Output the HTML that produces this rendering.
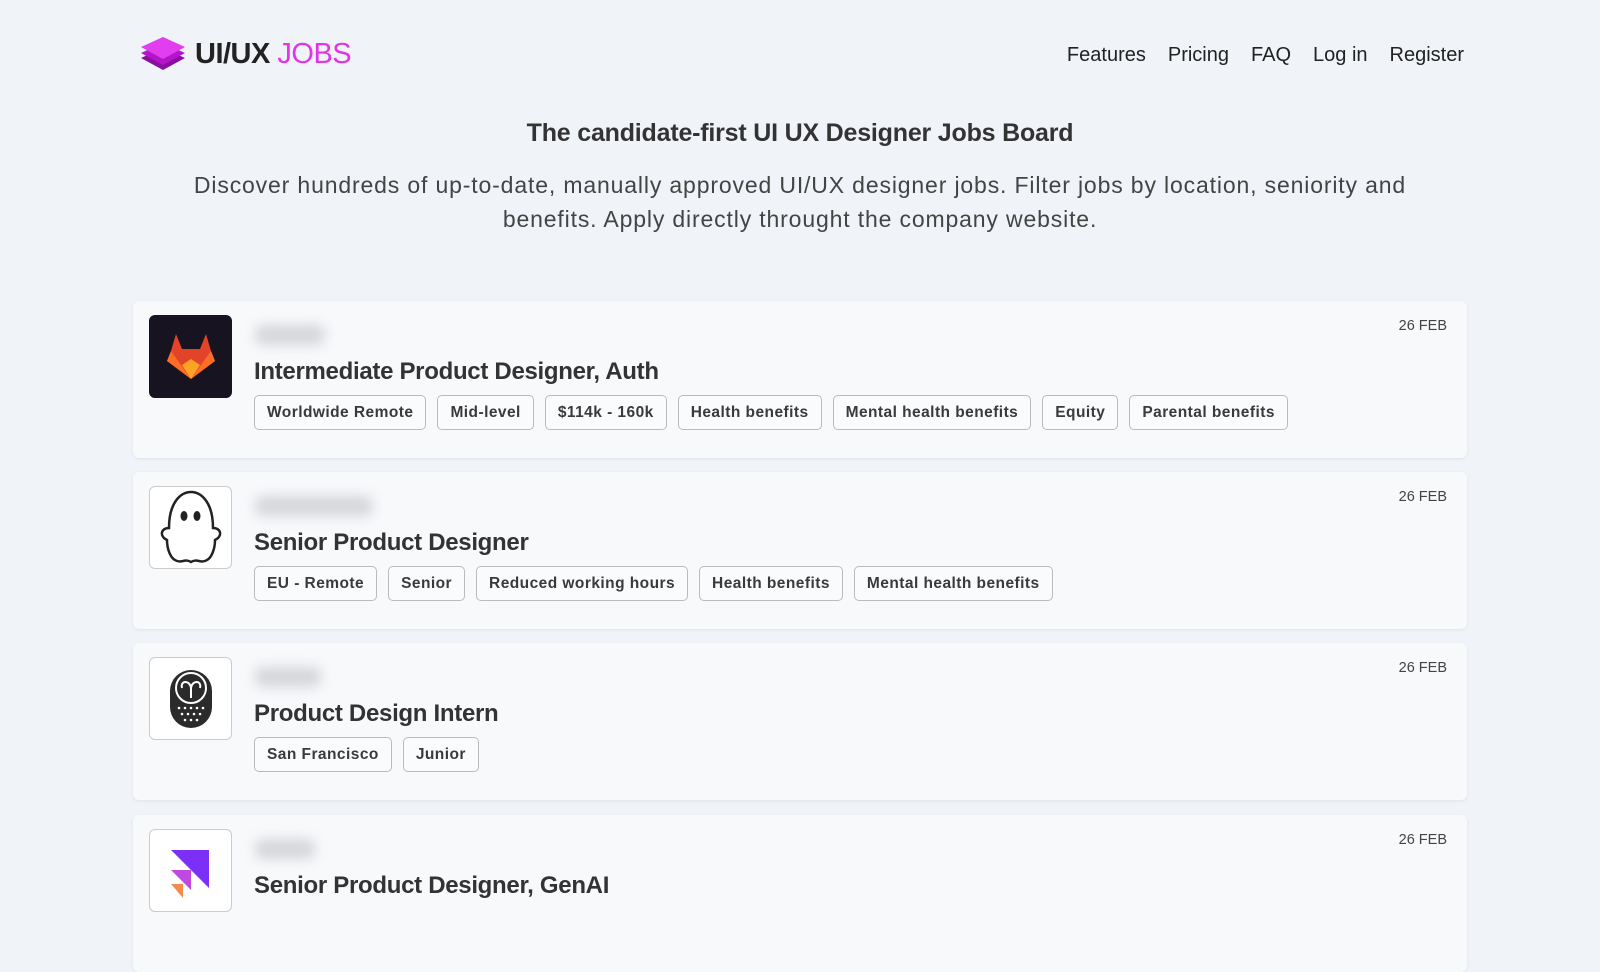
<!DOCTYPE html>
<html><head><meta charset="utf-8"><style>
*{box-sizing:border-box;margin:0;padding:0}
body{width:1600px;height:889px;overflow:hidden;background:#f0f3f8;font-family:"Liberation Sans",sans-serif;color:#222;position:relative}
.logo{position:absolute;left:141px;top:36px;display:flex;align-items:center}
.logo .t{font-size:29px;font-weight:bold;margin-left:10px;letter-spacing:-0.5px}
.logo .t span{color:#e233e6;font-weight:normal}
.nav{position:absolute;right:136px;top:44px;display:flex;gap:22px;font-size:20px;color:#222}
h1{position:absolute;top:119px;left:0;width:1600px;text-align:center;font-size:25px;font-weight:bold;color:#333;letter-spacing:-0.2px}
.sub{position:absolute;top:168px;left:170px;width:1260px;text-align:center;font-size:23px;line-height:34px;color:#444;letter-spacing:0.85px}
.card{position:absolute;left:133px;width:1334px;height:157px;background:#f7f9fb;border-radius:6px;box-shadow:0 1px 3px rgba(0,0,0,.07)}
.lg{position:absolute;left:16px;top:14px;width:83px;height:83px;border-radius:6px;border:1px solid #ccc;background:#fff;overflow:hidden;display:flex;align-items:center;justify-content:center}
.co{position:absolute;left:122px;top:24px;width:70px;height:20px;background:#d4d6da;filter:blur(6px);border-radius:8px}
.ti{position:absolute;left:121px;top:57px;font-size:24px;color:#333;font-weight:bold;letter-spacing:-0.3px}
.tags{position:absolute;left:121px;top:94px;display:flex;gap:11px}
.tag{height:35px;border:1px solid #bbb;border-radius:5px;padding:0 12px;font-size:15.5px;font-weight:bold;line-height:33px;color:#3a3a3a;background:#fafbfc;letter-spacing:0.45px}
.dt{position:absolute;right:20px;top:17px;font-size:14.5px;color:#444}
</style></head><body>
<div class="logo"><svg width="44" height="36" viewBox="0 0 44 36"><path d="M22 12 L44 22 L22 34 L0 22Z" fill="#8a0fa0"/><path d="M22 7 L44 17 L22 29 L0 17Z" fill="#b316c8"/><path d="M22 1 L44 11 L22 23 L0 11Z" fill="#e23ef0"/></svg><div class="t">UI/UX <span>JOBS</span></div></div>
<div class="nav"><span>Features</span><span>Pricing</span><span>FAQ</span><span>Log in</span><span>Register</span></div>
<h1>The candidate-first UI UX Designer Jobs Board</h1>
<div class="sub">Discover hundreds of up-to-date, manually approved UI/UX designer jobs. Filter jobs by location, seniority and benefits. Apply directly throught the company website.</div>

<div class="card" style="top:301px">
<div class="lg" style="background:#171321;border-color:#171321"><svg width="56" height="56" viewBox="0 0 56 56"><path d="M8 22 L13 5 L19 20 H37 L43 5 L48 22 L52 32 L28 50 L4 32Z" fill="#e24329"/><path d="M4 32 L8 22 L28 50Z" fill="#fc6d26"/><path d="M52 32 L48 22 L28 50Z" fill="#fc6d26"/><path d="M19 36 L28 50 L37 36 L28 30Z" fill="#fca326"/></svg></div>
<div class="co"></div><div class="ti">Intermediate Product Designer, Auth</div>
<div class="tags"><div class="tag">Worldwide Remote</div><div class="tag">Mid-level</div><div class="tag">$114k - 160k</div><div class="tag">Health benefits</div><div class="tag">Mental health benefits</div><div class="tag">Equity</div><div class="tag">Parental benefits</div></div>
<div class="dt">26 FEB</div></div>

<div class="card" style="top:472px">
<div class="lg"><svg width="80" height="80" viewBox="0 0 80 80"><path d="M18 40 C18 14 30 4 40 4 C50 4 62 14 62 40 C70 40 72 48 64 52 C64 62 60 70 56 72 C50 76 46 70 40 74 C34 70 30 76 24 72 C20 70 16 62 16 52 C8 48 10 40 18 40Z" fill="#fff" stroke="#222" stroke-width="2.5"/><ellipse cx="33" cy="28" rx="3.5" ry="5" fill="#222"/><ellipse cx="46" cy="28" rx="3.5" ry="5" fill="#222"/></svg></div>
<div class="co" style="width:118px"></div><div class="ti">Senior Product Designer</div>
<div class="tags"><div class="tag">EU - Remote</div><div class="tag">Senior</div><div class="tag">Reduced working hours</div><div class="tag">Health benefits</div><div class="tag">Mental health benefits</div></div>
<div class="dt">26 FEB</div></div>

<div class="card" style="top:643px">
<div class="lg"><svg width="50" height="62" viewBox="0 0 50 62"><rect x="4" y="2" width="42" height="58" rx="21" fill="#2b2b2b"/><circle cx="25" cy="20" r="15" fill="none" stroke="#fff" stroke-width="2"/><path d="M16 20 C14 12 24 12 25 20 C26 12 36 12 34 20 M25 20 L25 30" fill="none" stroke="#fff" stroke-width="2"/><g fill="#fff"><circle cx="13" cy="40" r="1.3"/><circle cx="19" cy="40" r="1.3"/><circle cx="25" cy="40" r="1.3"/><circle cx="31" cy="40" r="1.3"/><circle cx="37" cy="40" r="1.3"/><circle cx="16" cy="46" r="1.3"/><circle cx="22" cy="46" r="1.3"/><circle cx="28" cy="46" r="1.3"/><circle cx="34" cy="46" r="1.3"/><circle cx="19" cy="52" r="1.3"/><circle cx="25" cy="52" r="1.3"/><circle cx="31" cy="52" r="1.3"/></g></svg></div>
<div class="co" style="width:66px"></div><div class="ti">Product Design Intern</div>
<div class="tags"><div class="tag">San Francisco</div><div class="tag">Junior</div></div>
<div class="dt">26 FEB</div></div>

<div class="card" style="top:815px">
<div class="lg" style="align-items:flex-start;padding-top:18px"><svg width="44" height="60" viewBox="0 0 44 60"><path d="M2 2 H40 V40Z" fill="#7b2ff7"/><path d="M2 22 L22 22 L22 42Z" fill="#c04ae0"/><path d="M2 36 L14 36 L14 50Z" fill="#f58a4c"/></svg></div>
<div class="co" style="width:60px"></div><div class="ti">Senior Product Designer, GenAI</div>
<div class="dt">26 FEB</div></div>
</body></html>
